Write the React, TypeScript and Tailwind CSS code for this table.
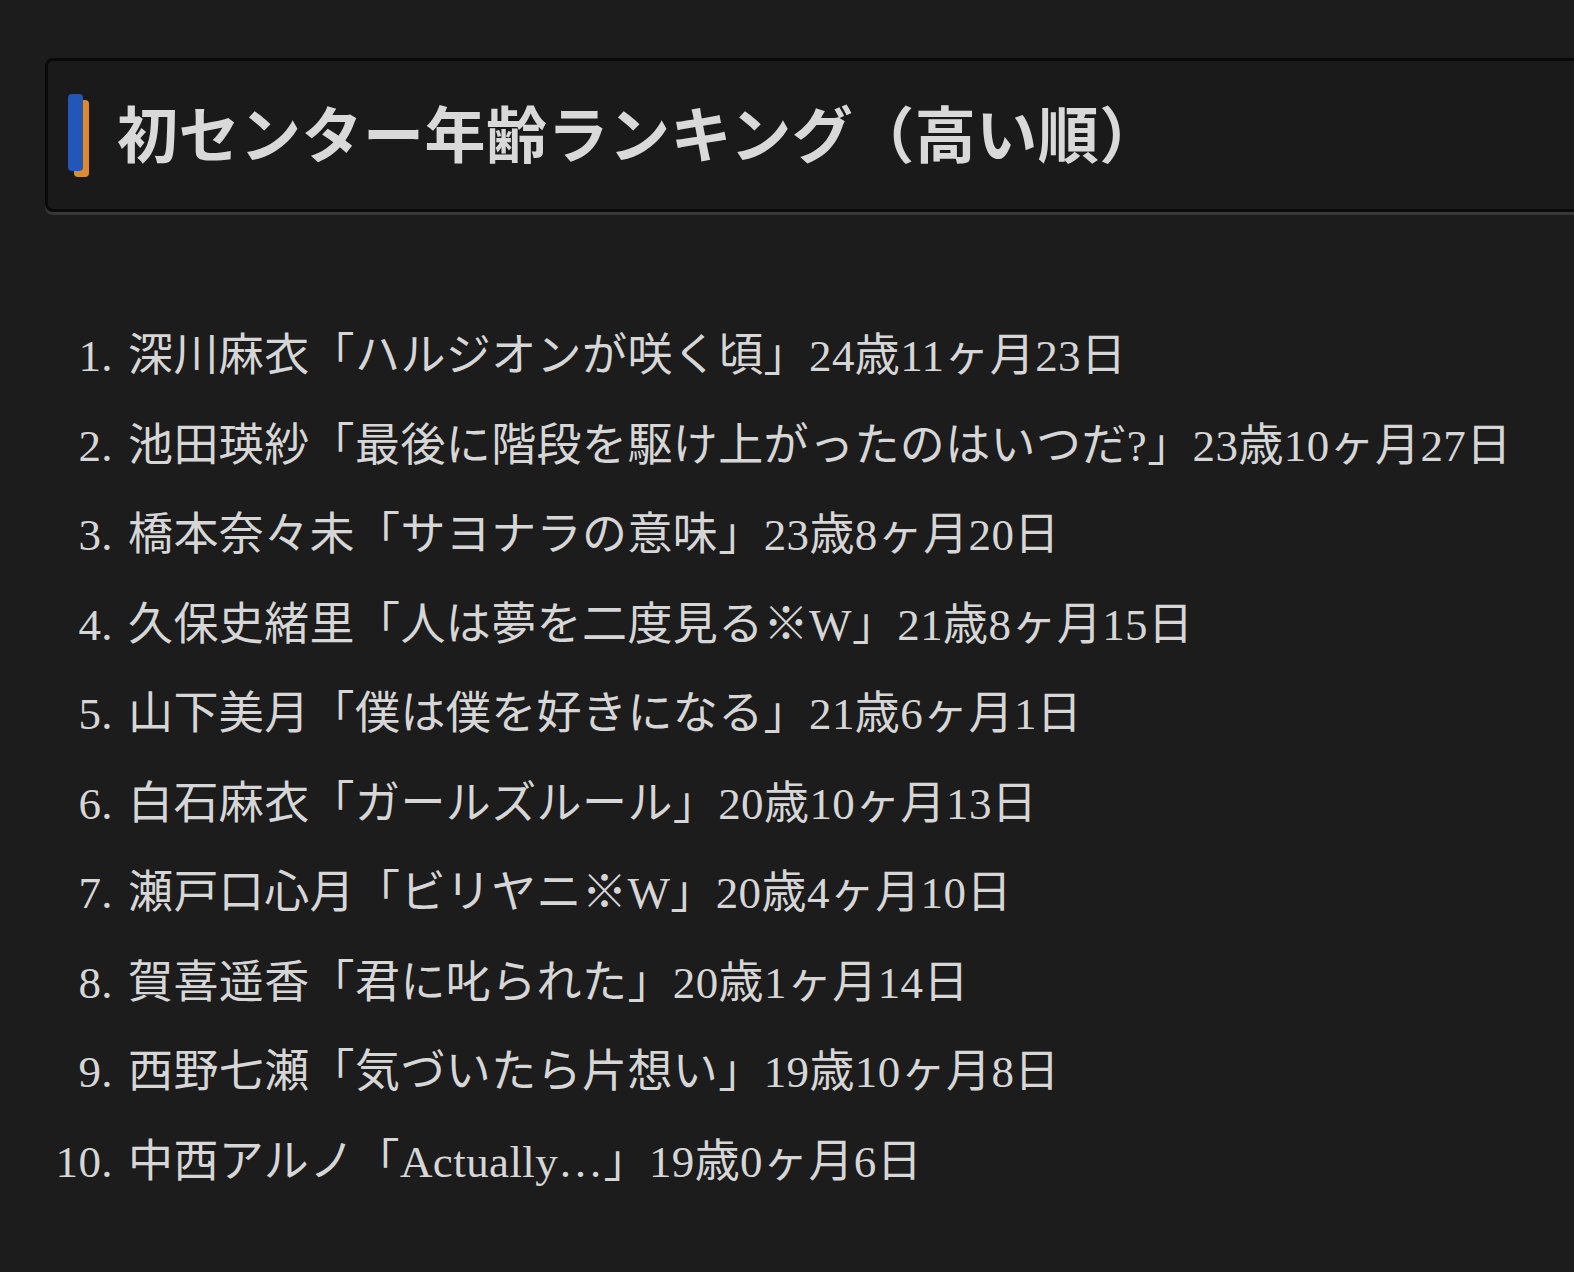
import React from 'react';

type Entry = { name: string; song: string; age: string };

const entries: Entry[] = [
    { name: '深川麻衣', song: '「ハルジオンが咲く頃」', age: '24歳11ヶ月23日' },
    { name: '池田瑛紗', song: '「最後に階段を駆け上がったのはいつだ?」', age: '23歳10ヶ月27日' },
    { name: '橋本奈々未', song: '「サヨナラの意味」', age: '23歳8ヶ月20日' },
    { name: '久保史緒里', song: '「人は夢を二度見る※W」', age: '21歳8ヶ月15日' },
    { name: '山下美月', song: '「僕は僕を好きになる」', age: '21歳6ヶ月1日' },
    { name: '白石麻衣', song: '「ガールズルール」', age: '20歳10ヶ月13日' },
    { name: '瀬戸口心月', song: '「ビリヤニ※W」', age: '20歳4ヶ月10日' },
    { name: '賀喜遥香', song: '「君に叱られた」', age: '20歳1ヶ月14日' },
    { name: '西野七瀬', song: '「気づいたら片想い」', age: '19歳10ヶ月8日' },
    { name: '中西アルノ', song: '「Actually…」', age: '19歳0ヶ月6日' },
];

const font = { fontFamily: '"Liberation Serif", "Noto Sans CJK JP", serif' };

const App: React.FC = () => {
    return (
        <div className="min-h-screen w-full overflow-hidden bg-[#1c1c1c] text-[#d6d6d6]" style={font}>
            <div className="pt-[58px] pl-[45px]">
                {/* Heading */}
                <div className="w-[1560px] h-[154px] rounded-lg border-[3px] border-[#0a0a0a] bg-[#1a1a1a] shadow-[0_3px_0_#383838] flex items-center pl-[20px]">
                    <div className="relative w-[22px] h-[83px] shrink-0">
                        <span className="absolute left-[6px] top-[6px] w-[15px] h-[77px] rounded-[4px] bg-[#e08a2e]"></span>
                        <span className="absolute left-0 top-0 w-[15px] h-[77px] rounded-[4px] bg-[#2456b8]"></span>
                    </div>
                    <h1 className="ml-[27px] mt-[4px] text-[61px] tracking-[0.5px] font-bold text-[#d9d9d9] whitespace-nowrap leading-none">
                        初センター年齢ランキング（高い順）
                    </h1>
                </div>

                {/* Ranking */}
                <ol className="mt-[100px] text-[45px] tracking-[0.4px] leading-[89.5px] whitespace-nowrap">
                    {entries.map((e, i) => (
                        <li key={i} className="flex">
                            <span className="w-[68px] text-right shrink-0">{i + 1}.</span>
                            <span className="ml-[15px]">{e.name}{e.song}{e.age}</span>
                        </li>
                    ))}
                </ol>
            </div>
        </div>
    );
};

export default App;
